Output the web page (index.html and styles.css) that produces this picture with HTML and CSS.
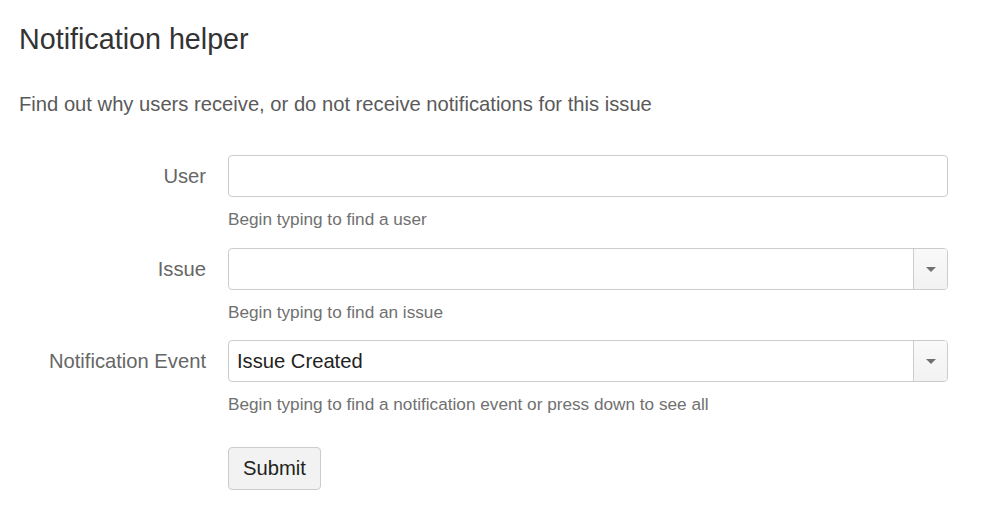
FILE: index.html
```html
<!DOCTYPE html>
<html lang="en">
<head>
<meta charset="utf-8">
<title>Notification helper</title>
<link rel="stylesheet" href="styles.css">
</head>
<body>
<div class="page">
  <h1 class="title">Notification helper</h1>
  <p class="intro">Find out why users receive, or do not receive notifications for this issue</p>
  <form class="form">
    <div class="row">
      <label class="label" for="user">User</label>
      <div class="field">
        <div class="input"><input id="user" type="text"></div>
        <div class="help">Begin typing to find a user</div>
      </div>
    </div>
    <div class="row">
      <label class="label" for="issue">Issue</label>
      <div class="field">
        <div class="input select">
          <input id="issue" type="text">
          <span class="drop"><span class="arrow"></span></span>
        </div>
        <div class="help">Begin typing to find an issue</div>
      </div>
    </div>
    <div class="row">
      <label class="label" for="event">Notification Event</label>
      <div class="field">
        <div class="input select">
          <input id="event" type="text" value="Issue Created">
          <span class="drop"><span class="arrow"></span></span>
        </div>
        <div class="help">Begin typing to find a notification event or press down to see all</div>
      </div>
    </div>
    <div class="row actions">
      <span class="label"></span>
      <div class="field">
        <button type="button" class="button">Submit</button>
      </div>
    </div>
  </form>
</div>
</body>
</html>
```

FILE: styles.css
```css
html, body {
  margin: 0;
  padding: 0;
  background: #fff;
}
body {
  font-family: "Liberation Sans", Arial, Helvetica, sans-serif;
  color: #333;
}
.page {
  padding: 22px 0 0 19px;
}
.title {
  margin: 0;
  font-size: 28.7px;
  line-height: 34px;
  font-weight: normal;
  color: #333;
}
.intro {
  margin: 36px 0 0 0;
  font-size: 20.2px;
  line-height: 24px;
  color: #5a5a5a;
}
.form {
  margin-top: 39px;
  display: flex;
  flex-direction: column;
  gap: 18px;
}
.row {
  display: grid;
  grid-template-columns: 187px 720px;
  column-gap: 22px;
}
.row:first-child {
  margin-bottom: 1px;
}
.actions {
  margin-top: 15px;
}
.label {
  text-align: right;
  font-size: 20.2px;
  line-height: 42px;
  color: #666;
}
.field {
  display: flex;
  flex-direction: column;
}
.input {
  display: flex;
  height: 42px;
  box-sizing: border-box;
  border: 1px solid #cccccc;
  border-radius: 4px;
  background: #fff;
  overflow: hidden;
}
.input input {
  flex: 1;
  min-width: 0;
  border: 0;
  outline: none;
  margin: 0;
  padding: 0 8px;
  font-family: inherit;
  font-size: 20.2px;
  color: #222;
  background: transparent;
}
.drop {
  width: 33px;
  border-left: 1px solid #cccccc;
  background: linear-gradient(#f9f9f9, #f2f2f2);
  display: flex;
  align-items: center;
  justify-content: center;
}
.arrow {
  width: 0;
  height: 0;
  border-left: 5px solid transparent;
  border-right: 5px solid transparent;
  border-top: 5px solid #707070;
}
.help {
  margin-top: 12px;
  font-size: 17.2px;
  line-height: 20px;
  color: #707070;
}
.button {
  width: 93px;
  height: 43px;
  box-sizing: border-box;
  border: 1px solid #cccccc;
  border-radius: 4px;
  background: #f2f2f2;
  font-family: inherit;
  font-size: 20.2px;
  color: #222;
  padding: 0;
}
```
